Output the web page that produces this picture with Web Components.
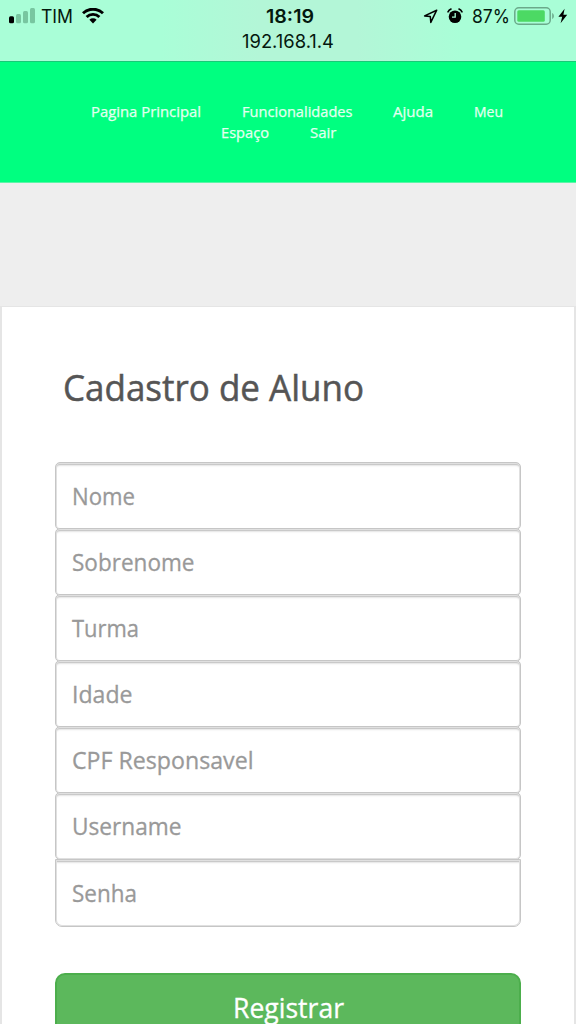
<!DOCTYPE html>
<html lang="pt">
<head>
<meta charset="utf-8">
<title>Cadastro de Aluno</title>
<style>
html,body{margin:0;height:1024px;overflow:hidden;background:#eee}
body{font-family:"Open Sans","Noto Sans",sans-serif}
</style>
</head>
<body>
<school-app></school-app>
<script>
const shadow = (el, html) => { el.attachShadow({mode:'open'}).innerHTML = html; };

/* Single line of text condensed or widened to a given width */
customElements.define('fit-text', class extends HTMLElement {
  connectedCallback(){
    shadow(this, `<style>
      :host{display:block;flex:none;white-space:nowrap;text-align:left}
      span{display:inline-block;transform-origin:0 50%}
    </style><span><slot></slot></span>`);
    const w = +this.getAttribute('w'), s = this.shadowRoot.querySelector('span');
    this.style.width = w + 'px';
    const n = s.getBoundingClientRect().width;
    if (n) s.style.transform = `scaleX(${w / n})`;
  }
});

customElements.define('status-bar', class extends HTMLElement {
  connectedCallback(){
    shadow(this, `<style>
      :host{display:block;box-sizing:border-box;height:62px;border-bottom:1px solid #19c977;color:#04180e;
        background:linear-gradient(90deg,#a9fed7 0,#a9fed7 28%,#b3f6d7 45%,#b3f6d7 62%,#a9fed7 80%);
        font-family:Inter,sans-serif;font-size:18.3px;line-height:24px}
      .row{display:grid;grid-template-columns:266px 48px 1fr;height:32px;align-items:center}
      .l,.r{display:flex;align-items:center}
      .l{padding-left:9px}.r{padding-left:109px}
      svg{display:block;flex:none}
      .t{font-weight:600}
      .url{display:flex;justify-content:center;height:18px;line-height:18px}
    </style>
    <div class="row">
      <div class="l">
        <svg width="26" height="16" viewBox="0 0 26 16"><rect x="0" y="8.3" width="5" height="7" rx="1.5"/><g fill="#78c6a0"><rect x="7" y="6" width="5" height="9.3" rx="1.5"/><rect x="14" y="3" width="5" height="12.3" rx="1.5"/><rect x="21" y="0" width="5" height="15.3" rx="1.5"/></g></svg>
        <fit-text w="32" style="margin-left:6px">TIM</fit-text>
        <svg width="22" height="16" viewBox="0 0 22 16" style="margin-left:9px" fill="none" stroke="#000" stroke-width="2.9"><path d="M1 5.3a14.2 14.2 0 0 1 20 0M4.6 9a9.1 9.1 0 0 1 12.8 0"/><path d="M7.4 11.8a5.1 5.1 0 0 1 7.2 0L11 15.4Z" fill="#000" stroke="none"/></svg>
      </div>
      <fit-text class="t" w="48">18:19</fit-text>
      <div class="r">
        <svg width="15" height="15" viewBox="0 0 15 15"><path d="M13.7 1.2 1.6 6.9l5.7.6.5 5.9Z" fill="none" stroke="#000" stroke-width="1.5" stroke-linejoin="round"/></svg>
        <svg width="16" height="16" viewBox="0 0 16 16" style="margin-left:9px"><circle cx="8" cy="8.8" r="6.3"/><path d="M1 3.8A6 6 0 0 1 4 1M12 1a6 6 0 0 1 3 2.8" fill="none" stroke="#000" stroke-width="1.6" stroke-linecap="round"/><path d="M8.2 5v4.2H5" fill="none" stroke="#a9fed7" stroke-width="1.3"/></svg>
        <fit-text w="38" style="margin-left:9px">87%</fit-text>
        <svg width="42" height="18" viewBox="0 0 42 18" style="margin-left:4px"><rect x=".8" y=".8" width="35.4" height="16.4" rx="4" fill="none" stroke="#6ba98a" stroke-width="1.5"/><rect x="3.3" y="3.2" width="27.5" height="11.6" rx="1.5" fill="#4cd964"/><path d="M38.2 6c2.2 1 2.2 5 0 6Z" fill="#6ba98a"/></svg>
        <svg width="10" height="16" viewBox="0 0 10 16" style="margin-left:2px"><path d="M6.6.8.4 8.8h3.8L2.6 15.2l6.6-8.5H5.4Z"/></svg>
      </div>
    </div>
    <div class="url"><fit-text w="92">192.168.1.4</fit-text></div>`);
  }
});

customElements.define('main-nav', class extends HTMLElement {
  connectedCallback(){
    shadow(this, `<style>
      :host{display:block;box-sizing:border-box;height:121px;padding-top:38.5px;background:#00ff80;border-bottom:1px solid #5cf5a8;color:#e4fff1;font-size:14.9px;line-height:21px;-webkit-text-stroke:.25px}
      div{display:flex;gap:41px;padding-left:90.5px}
      div+div{padding-left:220.5px}
    </style>
    <div><fit-text w="110">Pagina Principal</fit-text><fit-text w="110.5">Funcionalidades</fit-text><fit-text w="40">Ajuda</fit-text><fit-text w="29">Meu</fit-text></div>
    <div><fit-text w="48">Espaço</fit-text><fit-text w="26.5">Sair</fit-text></div>`);
  }
});

customElements.define('form-field', class extends HTMLElement {
  connectedCallback(){
    shadow(this, `<style>
      :host{display:flex;align-items:center;box-sizing:border-box;height:68px;margin-bottom:-2px;padding-left:16px;
        border:1px solid #c6c6c6;border-radius:5px;background:#fff;
        box-shadow:inset 0 0 0 1px #e0e0e0,inset 0 2px 1px #c6c6c6,inset 0 4px 2px -1px #e8e8e8;
        color:#999;font-size:24.5px;line-height:32px;-webkit-text-stroke:.3px}
      :host([last]){margin:1px 0 0;border-radius:0 0 7px 7px}
    </style><fit-text w="${this.getAttribute('w')}">${this.getAttribute('label')}</fit-text>`);
  }
});

customElements.define('submit-button', class extends HTMLElement {
  connectedCallback(){
    shadow(this, `<style>
      :host{display:flex;justify-content:center;box-sizing:border-box;height:68px;margin-top:46px;padding-top:17px;
        border:2px solid #4cae4c;border-radius:10px;background:#5cb85c;color:#fff;font-size:27.3px;line-height:32px;-webkit-text-stroke:.3px}
    </style><fit-text w="111"><slot></slot></fit-text>`);
  }
});

customElements.define('signup-card', class extends HTMLElement {
  connectedCallback(){
    const fields = [['Nome',63],['Sobrenome',122.5],['Turma',67],['Idade',60.5],['CPF Responsavel',181.5],['Username',109.5],['Senha',65]];
    shadow(this, `<style>
      :host{display:block;box-sizing:border-box;height:760px;margin-top:123px;padding:56px 53px 0;border:2px solid #e5e5e5;border-top-width:1px;background:#fff}
      h2{margin:0 0 50px;padding-left:7.5px;font-weight:400;font-size:36px;line-height:49px;color:#555;-webkit-text-stroke:.5px}
    </style>
    <h2><fit-text w="301">Cadastro de Aluno</fit-text></h2>
    <div>${fields.map(([t,w],i)=>`<form-field label="${t}" w="${w}"${i===6?' last':''}></form-field>`).join('')}</div>
    <submit-button>Registrar</submit-button>`);
  }
});

customElements.define('school-app', class extends HTMLElement {
  connectedCallback(){
    shadow(this, `<style>:host{display:block;width:576px;height:1024px;overflow:hidden;background:#eee}</style>
      <status-bar></status-bar><main-nav></main-nav><signup-card></signup-card>`);
  }
});
</script>
</body>
</html>
